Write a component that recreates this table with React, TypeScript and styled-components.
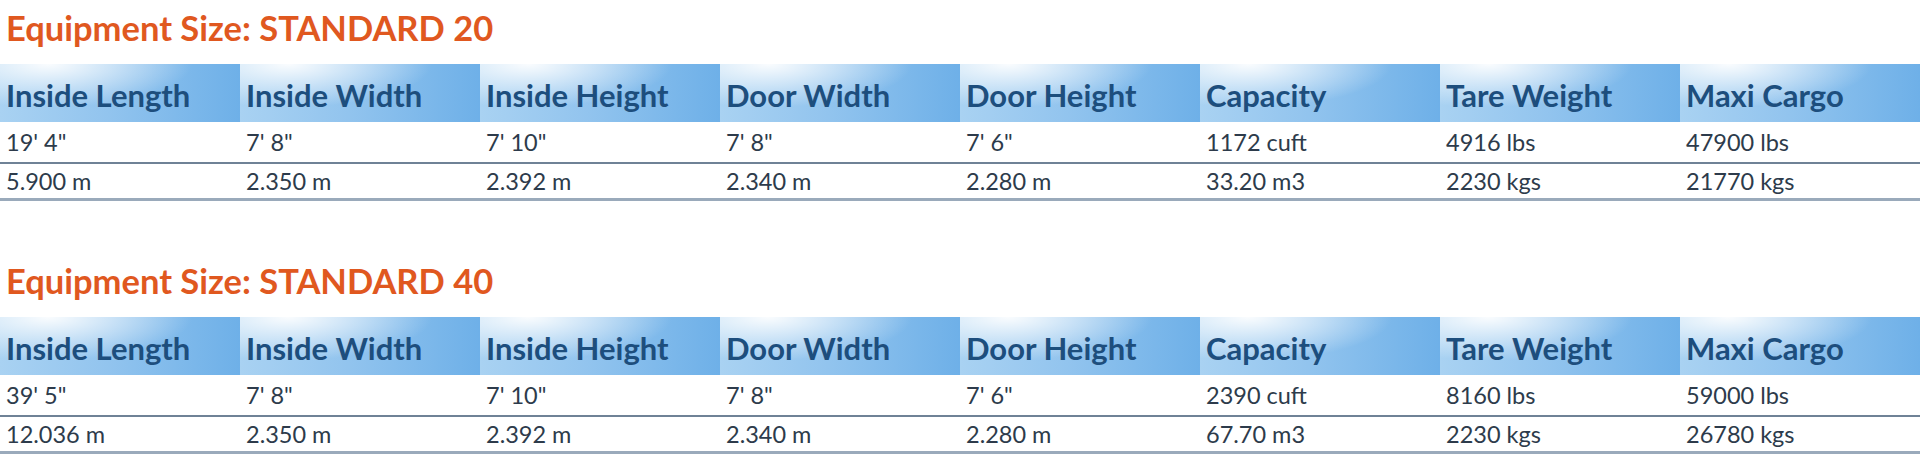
import React from 'react'
import styled, { createGlobalStyle } from 'styled-components'

const GlobalStyle = createGlobalStyle`
  html, body {
    margin: 0;
    padding: 0;
    background: #ffffff;
  }
  body {
    font-family: Lato, "Open Sans", "Liberation Sans", sans-serif;
  }
`

const Page = styled.div`
  display: flex;
  flex-direction: column;
  gap: 52px;
  width: 1920px;
`

const Section = styled.section`
  display: flex;
  flex-direction: column;
`

const Title = styled.h2`
  margin: 0;
  padding: 8px 0 0 6px;
  height: 64px;
  box-sizing: border-box;
  font-size: 34.5px;
  line-height: 40px;
  font-weight: 700;
  color: #e0581f;
`

const Row = styled.div<{ $line?: 'dark' | 'light' }>`
  display: grid;
  grid-template-columns: repeat(8, 240px);
  ${({ $line }) =>
    $line === 'dark'
      ? 'border-bottom: 2px solid #6f8296;'
      : $line === 'light'
      ? 'border-bottom: 3px solid #9aaabb;'
      : ''}
`

const HeadCell = styled.div`
  height: 58px;
  box-sizing: border-box;
  display: flex;
  align-items: flex-end;
  padding: 0 0 8px 6px;
  font-size: 31px;
  line-height: 38px;
  font-weight: 700;
  color: #1d4e7d;
  background:
    radial-gradient(ellipse 60% 75% at 20% 0%, rgba(255, 255, 255, 0.95) 0%, rgba(255, 255, 255, 0) 100%),
    linear-gradient(90deg, #a9d2f2 0%, #92c4ee 45%, #6eb0e8 100%);
`

const Cell = styled.div<{ $h: number }>`
  height: ${({ $h }) => $h}px;
  box-sizing: border-box;
  display: flex;
  align-items: center;
  padding: 0 0 0 6px;
  font-size: 23.5px;
  color: #2d3b4b;
`

const heads = [
  'Inside Length',
  'Inside Width',
  'Inside Height',
  'Door Width',
  'Door Height',
  'Capacity',
  'Tare Weight',
  'Maxi Cargo',
]

type Spec = { name: string; imperial: string[]; metric: string[] }

const specs: Spec[] = [
  {
    name: 'STANDARD 20',
    imperial: ["19' 4\"", "7' 8\"", "7' 10\"", "7' 8\"", "7' 6\"", '1172 cuft', '4916 lbs', '47900 lbs'],
    metric: ['5.900 m', '2.350 m', '2.392 m', '2.340 m', '2.280 m', '33.20 m3', '2230 kgs', '21770 kgs'],
  },
  {
    name: 'STANDARD 40',
    imperial: ["39' 5\"", "7' 8\"", "7' 10\"", "7' 8\"", "7' 6\"", '2390 cuft', '8160 lbs', '59000 lbs'],
    metric: ['12.036 m', '2.350 m', '2.392 m', '2.340 m', '2.280 m', '67.70 m3', '2230 kgs', '26780 kgs'],
  },
]

const SpecTable = ({ name, imperial, metric }: Spec) => (
  <Section>
    <Title>Equipment Size: {name}</Title>
    <Row>
      {heads.map((h) => (
        <HeadCell key={h}>{h}</HeadCell>
      ))}
    </Row>
    <Row $line="dark">
      {imperial.map((v, i) => (
        <Cell key={i} $h={40}>{v}</Cell>
      ))}
    </Row>
    <Row $line="light">
      {metric.map((v, i) => (
        <Cell key={i} $h={34}>{v}</Cell>
      ))}
    </Row>
  </Section>
)

const App = () => (
  <Page>
    <GlobalStyle />
    {specs.map((s) => (
      <SpecTable key={s.name} {...s} />
    ))}
  </Page>
)

export default App
